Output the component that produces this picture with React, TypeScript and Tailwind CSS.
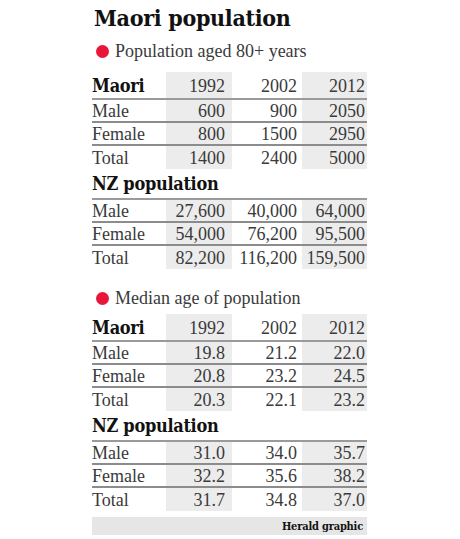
import { FC } from "react";

type Row = { label: string; values: string[] };

const heading = "font-['DejaVu_Serif_Condensed','DejaVu_Serif',serif] font-bold text-[#111]";
const body = "font-['Liberation_Serif',serif] text-[#3a3a3a] leading-none";

const maori80: Row[] = [
  { label: "Male", values: ["600", "900", "2050"] },
  { label: "Female", values: ["800", "1500", "2950"] },
  { label: "Total", values: ["1400", "2400", "5000"] },
];

const nz80: Row[] = [
  { label: "Male", values: ["27,600", "40,000", "64,000"] },
  { label: "Female", values: ["54,000", "76,200", "95,500"] },
  { label: "Total", values: ["82,200", "116,200", "159,500"] },
];

const maoriMedian: Row[] = [
  { label: "Male", values: ["19.8", "21.2", "22.0"] },
  { label: "Female", values: ["20.8", "23.2", "24.5"] },
  { label: "Total", values: ["20.3", "22.1", "23.2"] },
];

const nzMedian: Row[] = [
  { label: "Male", values: ["31.0", "34.0", "35.7"] },
  { label: "Female", values: ["32.2", "35.6", "38.2"] },
  { label: "Total", values: ["31.7", "34.8", "37.0"] },
];

const cellClass = [
  "bg-[#ececec] pr-[7px]",
  "pr-[5px]",
  "bg-[#ececec] pr-[2px]",
];

const Subtitle: FC<{ text: string }> = ({ text }) => (
  <div className="flex items-center h-[26px]">
    <span className="ml-[4px] w-[13px] h-[13px] rounded-full bg-[#e8173a]" />
    <span className={`${body} ml-[6px] text-[18px]`}>{text}</span>
  </div>
);

const DataRows: FC<{ rows: Row[] }> = ({ rows }) => (
  <>
    {rows.map((row, i) => (
      <div
        key={row.label}
        className={`grid grid-cols-[74px_66px_70px_65px] grid-rows-[1fr] h-[23px] ${
          i < rows.length - 1 ? "border-b-2 border-[#8c8c8c]" : ""
        }`}
      >
        <div className={`${body} text-[18px] flex items-center`}>{row.label}</div>
        {row.values.map((v, j) => (
          <div
            key={j}
            className={`${body} ${cellClass[j]} text-[18px] flex items-center justify-end`}
          >
            {v}
          </div>
        ))}
      </div>
    ))}
  </>
);

const MaoriTable: FC<{ rows: Row[] }> = ({ rows }) => (
  <div>
    <div className="grid grid-cols-[74px_66px_70px_65px] grid-rows-[1fr] h-[28px] border-b-2 border-[#9a9a9a]">
      <div className={`${heading} text-[18px] leading-none flex items-center pt-[2px] tracking-[-0.3px]`}>
        Maori
      </div>
      {["1992", "2002", "2012"].map((y, j) => (
        <div
          key={y}
          className={`${body} ${cellClass[j]} text-[18px] flex items-center justify-end pt-[2px]`}
        >
          {y}
        </div>
      ))}
    </div>
    <DataRows rows={rows} />
  </div>
);

const NzTable: FC<{ rows: Row[] }> = ({ rows }) => (
  <div>
    <div
      className={`${heading} h-[31px] border-b-2 border-[#9a9a9a] text-[18px] leading-none flex items-end pb-[5px] tracking-[-0.3px]`}
    >
      NZ population
    </div>
    <DataRows rows={rows} />
  </div>
);

const App: FC = () => {
  return (
    <div className="w-[460px] h-[539px] bg-white overflow-hidden">
      <div className="ml-[92px] w-[275px] flex flex-col">
        <div className="h-[38px] pt-[4px]">
          <h1 className={`${heading} text-[23px] leading-[28px] tracking-[-0.3px] ml-[2px]`}>
            Maori population
          </h1>
        </div>
        <Subtitle text="Population aged 80+ years" />
        <div className="mt-[8px]">
          <MaoriTable rows={maori80} />
          <NzTable rows={nz80} />
        </div>
        <div className="mt-[16px]">
          <Subtitle text="Median age of population" />
        </div>
        <div className="mt-[3px]">
          <MaoriTable rows={maoriMedian} />
          <NzTable rows={nzMedian} />
        </div>
        <div className="mt-[6px] h-[18px] bg-[#e6e6e6] flex items-center justify-end pr-[4px]">
          <span className={`${heading} text-[11px] leading-none tracking-[-0.2px]`}>
            Herald graphic
          </span>
        </div>
      </div>
    </div>
  );
};

export default App;
